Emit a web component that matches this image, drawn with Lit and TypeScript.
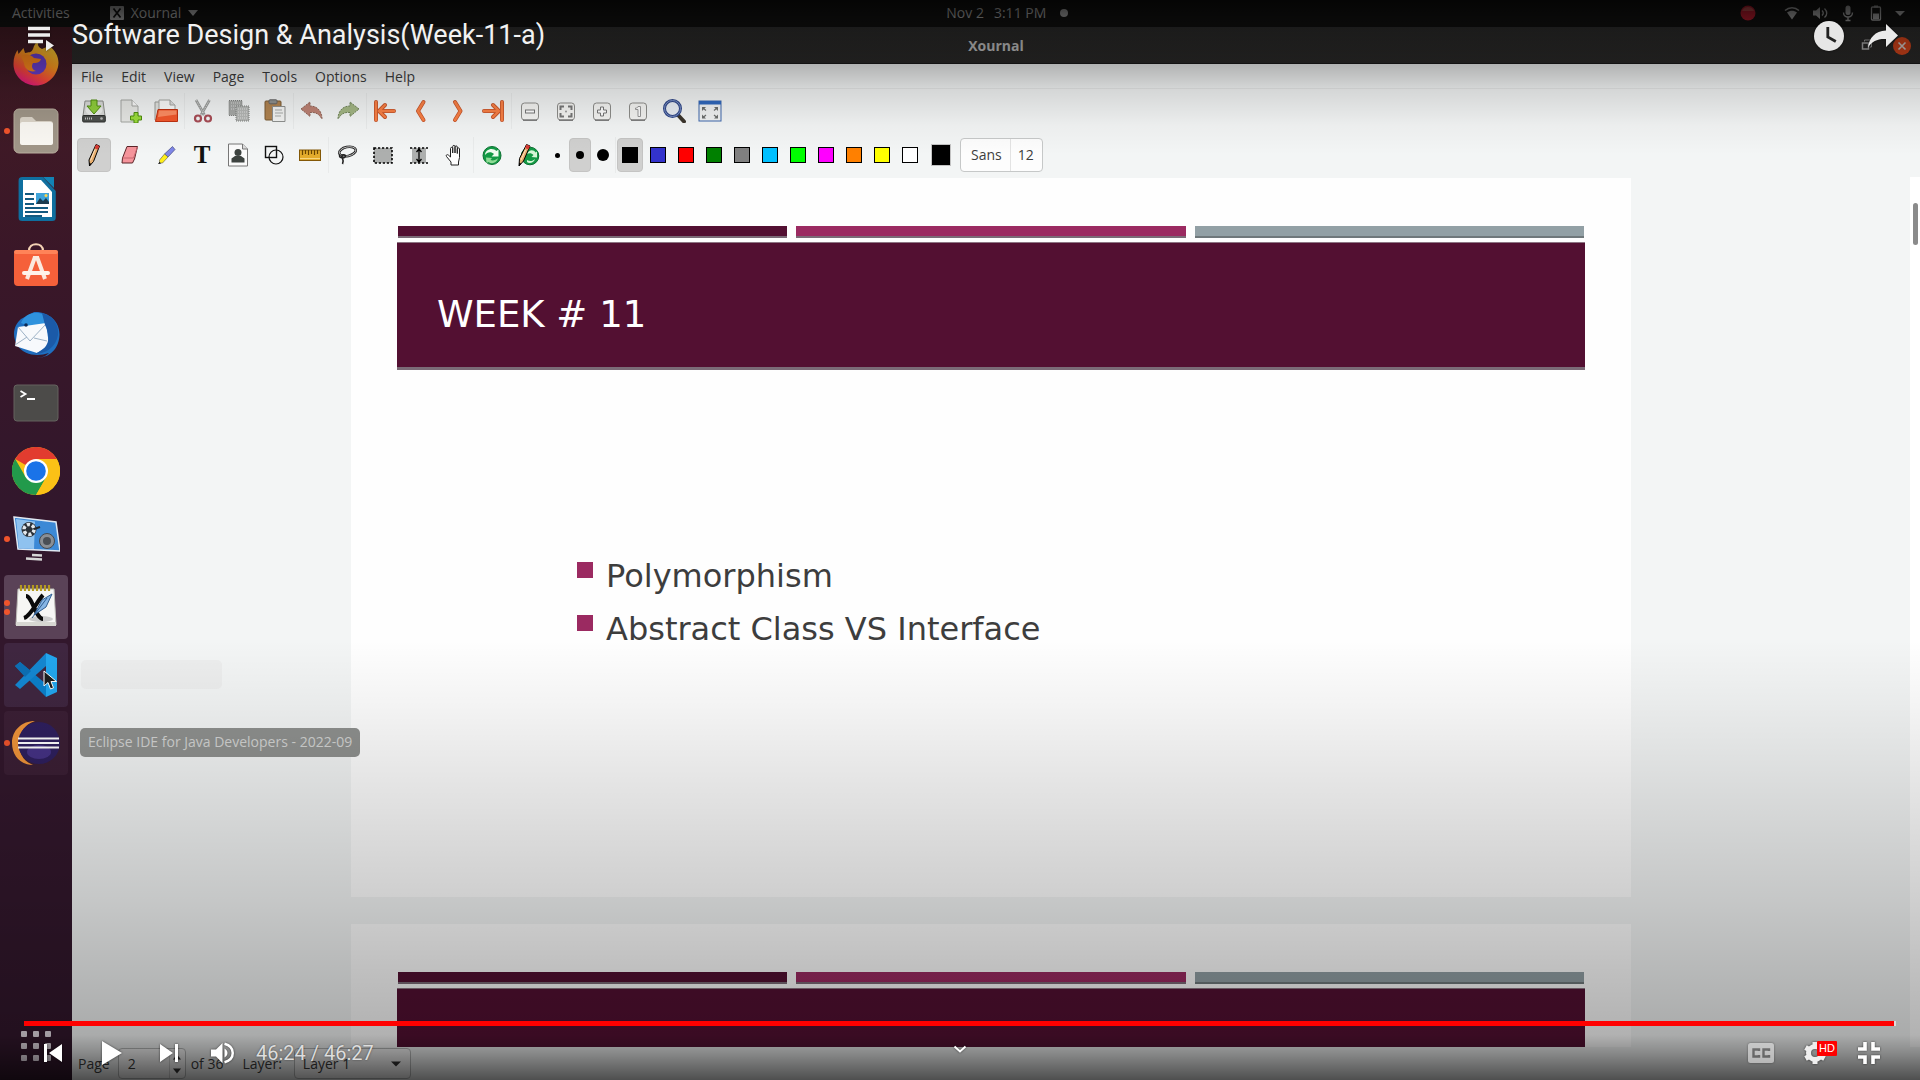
import { LitElement, html, css, svg, nothing, TemplateResult } from "lit";
import { customElement, property, state } from "lit/decorators.js";
import { classMap } from "lit/directives/class-map.js";
import { styleMap } from "lit/directives/style-map.js";

/* ---------- toolbar icons, 24 x 24 ---------- */
const zoomKey = (inner: TemplateResult) => svg`
  <rect x="3.5" y="4" width="17" height="17" rx="3" fill="#f4f4f2" stroke="#8d8d8a"/>
  <path d="M5 21.2h14" stroke="#777" stroke-width="1.4"/>${inner}`;

const arrow = (d: string) => svg`
  <path d=${d} fill="none" stroke="#c4532a" stroke-width="4" stroke-linecap="round" stroke-linejoin="round"/>
  <path d=${d} fill="none" stroke="#f98045" stroke-width="2.4" stroke-linecap="round" stroke-linejoin="round"/>`;

const icons: Record<string, TemplateResult> = {
  save: svg`<path d="M3 2h18l2 15H1z" fill="#d9dad8" stroke="#8b8d89"/>
    <ellipse cx="12" cy="11" rx="8.5" ry="5.5" fill="#eceeeb"/>
    <rect x=".7" y="16.5" width="22.6" height="6.5" rx="1" fill="#4c4f4c" stroke="#2e302e"/>
    <path d="M3 19.500h8" stroke="#c8c8c8" stroke-width="2" stroke-dasharray="1 1"/><circle cx="19.500" cy="19.500" r="1.300" fill="#bbb"/>
    <path d="M9 1h6v6h4l-7 8-7-8h4z" fill="#8fce3c" stroke="#4f8d0e"/>`,
  newpage: svg`<path d="M3 1h11l6 6v16H3z" fill="#e6e7e4" stroke="#a4a6a2"/><path d="M14 1v6h6" fill="#fafafa" stroke="#a4a6a2"/>
    <path d="M16 13.500h4v3.500h3.500v4H20v3h-4v-3h-3.500v-4H16z" fill="#9bdc3a" stroke="#4f8d0e"/>`,
  open: svg`<path d="M1 3h9l2 2v16H1z" fill="#e1e2df" stroke="#9b9d99"/><path d="M5 1h11l5 5v8H5z" fill="#fbfbfa" stroke="#a4a6a2"/><path d="M16 1v5h5" fill="#ddd" stroke="#a4a6a2"/>
    <path d="M4 10.500h19.500v12H1.500z" fill="#f2572b" stroke="#bf3110"/><path d="M5 11.500h17.500v4L4 18z" fill="#ff8d62"/>`,
  cut: svg`<path d="M5 1l8.500 15M18.500 1L10 16" stroke="#9a9c9a" stroke-width="2.600"/><path d="M5 1l8.500 15M18.500 1L10 16" stroke="#e3e4e3" stroke-width="1" stroke-dasharray="1 1"/>
    <circle cx="7" cy="19.500" r="3" fill="none" stroke="#a84c55" stroke-width="2.200"/><circle cx="17" cy="19.500" r="3" fill="none" stroke="#a84c55" stroke-width="2.200"/>`,
  copy: svg`<rect x="2" y="1.500" width="13" height="15" fill="#a6a8a6" stroke="#7f817f" stroke-dasharray="1 1"/><path d="M4 4h9M4 7h9M4 10h9" stroke="#d8d8d8" stroke-dasharray="1 1"/>
    <rect x="9" y="7" width="13" height="15" fill="#b4b6b4" stroke="#7f817f" stroke-dasharray="1 1"/><path d="M11 10h9M11 13h9M11 16h9M11 19h9" stroke="#e0e0e0" stroke-dasharray="1 1"/>`,
  paste: svg`<rect x="2" y="2" width="16" height="19" rx="1" fill="#b08350" stroke="#7b5a33"/><rect x="6" y=".8" width="8" height="4" rx="1" fill="#8e908e" stroke="#666"/>
    <path d="M9.500 7.500H22v15H9.500z" fill="#f3f4f3" stroke="#8f918f"/><path d="M12 11h7M12 14h8M12 17h6" stroke="#a9aba9"/>`,
  undo: svg`<path d="M1 10l9-7v4c8 0 12 6 12 13-3-5-6-7-12-6.500v4z" fill="#bd8274" stroke="#8f6558" stroke-dasharray="2 1"/>`,
  redo: svg`<path d="M23 10l-9-7v4C6 7 2 13 2 20c3-5 6-7 12-6.500v4z" fill="#a3b684" stroke="#6f8258" stroke-dasharray="2 1"/>`,
  first: arrow("M3 3v18M12 6l-6 6 6 6M7 12h14"),
  prev: arrow("M14.500 3L9 12l5.500 9"),
  next: arrow("M10 3l5.500 9-5.500 9"),
  last: arrow("M21 3v18M12 6l6 6-6 6M17 12H3"),
  zoomout: zoomKey(svg`<rect x="7.500" y="11" width="9" height="3" fill="#fff" stroke="#777"/>`),
  zoomfit: zoomKey(svg`<path d="M6.500 11V7.500H10M14 7.500h3.500V11M6.500 14v3.500H10M14 17.500h3.500V14" fill="none" stroke="#777" stroke-width="2"/><circle cx="12" cy="12.500" r="1" fill="#999"/>`),
  zoomin: zoomKey(svg`<path d="M10.500 8h3v3h3v3h-3v3h-3v-3h-3v-3h3z" fill="#fff" stroke="#777"/>`),
  zoomone: zoomKey(svg`<path d="M12 7.500h2.500v10H12v-7h-2.500V9C11 9 12 8.500 12 7.500z" fill="#fff" stroke="#999"/>`),
  find: svg`<path d="M16 16l6 6.500" stroke="#3b352c" stroke-width="4" stroke-linecap="round"/><circle cx="10.500" cy="9.500" r="8" fill="#e8edf4" stroke="#2f4687" stroke-width="3"/><circle cx="10.500" cy="9.500" r="8" fill="none" stroke="#7d93c8"/>`,
  full: svg`<rect x="1" y="2" width="22" height="20" fill="#f1f2f2" stroke="#3f68ae"/><rect x="1" y="2" width="22" height="3.500" fill="#3168bd"/>
    <path d="M4 12V8h4zM20 12V8h-4zM4 15.500v4h4zM20 15.500v4h-4z" fill="#6d6f6d"/><path d="M5 9l3 2.500M19 9l-3 2.500M5 18.500l3-2.500M19 18.500l-3-2.500" stroke="#6d6f6d" stroke-width="1.200"/>`,
  pencil: svg`<path d="M14 1.500L17.500 3 11.500 18.500l-4 4.500-.5-6z" fill="#e8ad6c" stroke="#000"/><path d="M14 1.500L17.500 3l-1.500 3.500-3.500-1.300z" fill="#d63a33"/><path d="M13 6.500L8.500 17.500" stroke="#fbe3c2"/><path d="M7.300 19.500l2 1.500-1.800 2z" fill="#000"/>`,
  eraser: svg`<path d="M9 3.500h10.500L16.500 16 14.500 20H4l.5-5z" fill="#f5949b" stroke="#5b2528"/><path d="M4.500 15h11l4-11" fill="none" stroke="#c7666f"/>`,
  marker: svg`<path d="M18.500 3.500l2.500 3-7 7.500-3.500-3z" fill="#7e86e8" stroke="#33366f" stroke-width=".6"/><path d="M10.500 11l3.500 3-5.500 6H5.500v-3z" fill="#ffef19" stroke="#555" stroke-width=".6"/><path d="M5.500 19L4 21l3-.5" fill="#000"/>`,
  image: svg`<path d="M2.500 1h14l5 5v17h-19z" fill="#fbfbfb" stroke="#777"/><path d="M16.500 1v5h5" fill="#ddd" stroke="#777"/><circle cx="12" cy="9.500" r="3.500" fill="#3d4340"/><path d="M5.500 19.500v-4l3.500-2.500h6l3.500 2.500v4z" fill="#3d4340"/>`,
  shapes: svg`<rect x="3.500" y="3.500" width="11" height="11" fill="none" stroke="#111" stroke-width="1.400"/><circle cx="14" cy="14" r="7" fill="none" stroke="#111" stroke-width="1.200"/>`,
  ruler: svg`<rect x="1.500" y="7" width="21" height="10.500" fill="#e3ab2b" stroke="#835807"/><path d="M4.500 7v5M7.500 7v4M10.500 7v5M13.500 7v4M16.500 7v5M19.500 7v4" stroke="#694500" stroke-width="1.200"/><path d="M2 15.500h20" stroke="#f8d67c"/>`,
  lasso: svg`<ellipse cx="12.500" cy="8.500" rx="8.500" ry="4.500" transform="rotate(-12 12.5 8.5)" fill="none" stroke="#222" stroke-width="2.600"/><ellipse cx="12.500" cy="8.500" rx="8.500" ry="4.500" transform="rotate(-12 12.5 8.5)" fill="none" stroke="#ddd" stroke-width=".8"/><path d="M5 11.500c-2 3 3 4.500 5 2.500s-2-3-3-1.500c-1 3 3 4 .500 8.500" fill="none" stroke="#222" stroke-width="1.600"/>`,
  select: svg`<rect x="3" y="5" width="18" height="15" fill="#adafae" stroke="#000" stroke-width="1.600" stroke-dasharray="2.200 1.800"/>`,
  vspace: svg`<rect x="5" y="5" width="14" height="15" fill="#adafae"/><path d="M3 5h18M3 20h18" stroke="#000" stroke-width="1.600" stroke-dasharray="2.200 1.800"/><path d="M12 6v13M9.500 9L12 6l2.500 3M9.500 16l2.500 3 2.500-3" fill="none" stroke="#000" stroke-width="1.300"/>`,
  hand: svg`<path d="M8 22v-3l-4.500-5.500c-1-1.500.800-2.500 2-1.300L7.500 14V5.500c0-1.500 2-1.500 2.200 0V10 3.500c0-1.500 2.300-1.500 2.300 0V10 4c0-1.500 2.300-1.500 2.300 0v6.500-4.500c0-1.500 2.200-1.500 2.200 0v8.500L15.500 19v3z" fill="#fff" stroke="#222"/>`,
  recycle: svg`<circle cx="12" cy="12.500" r="9" fill="#139a45" stroke="#0b7131"/><path d="M5 12c0-6 8-8 11.500-4l2-1.500v7h-7l2.500-2.500c-3-3-7-2-9 1z" fill="#f0fdf0"/><path d="M6 14.500l6 .5-1.500 2c2.500 1 5.500 0 7.500-2-1 5-6 6.500-9.500 4l-2 1z" fill="#8fdb95"/>`,
  pendefault: svg`<circle cx="14" cy="13" r="8.800" fill="#139a45" stroke="#0b7131"/><path d="M11 11c2-5 7-4.500 8.500-1.500l1.500-1v6l-5.500-.5 2-2c-2-2.500-5-2-6.500-1zM11 17c3 2 6 1 8-1-1 4-6 5-8 3z" fill="#d5f6d6"/><path d="M10.500 1.500L14 3 7.500 18l-4.500 5 .5-7.500z" fill="#e8ad6c" stroke="#000"/><path d="M10.500 1.500L14 3l-1.500 3.500L9 5z" fill="#d63a33"/><path d="M9.500 7L5 17" stroke="#fbe3c2"/><path d="M3.200 19.500l2 1.300L3 23z" fill="#000"/>`,
};

/* ---------- launcher icons, 48 x 48 ---------- */
const apps: Record<string, TemplateResult> = {
  firefox: svg`<defs><linearGradient id="ff" x1=".8" y1="0" x2=".3" y2="1"><stop offset="0" stop-color="#ffe13a"/><stop offset=".45" stop-color="#ff9a1f"/><stop offset=".75" stop-color="#ff4a3b"/><stop offset="1" stop-color="#e31587"/></linearGradient></defs>
    <path d="M27 1c-2 5-1 7 3 9l7-3c6 4 9.500 10 9.500 17C46 36 36 46.500 24 46.500S1.500 37 1.500 25c0-6 1.500-10 4-14l1 4 5-6 1.500 5c4-1 6 0 8-4 1-4 3-7 6-9z" fill="url(#ff)"/>
    <circle cx="24" cy="25" r="10.500" fill="#6a3fd0"/><path d="M9 17c5-3 10-1 13 2l7 1c-1 4-5 4-8 4-2 3-1 7 3 8-7 2-12-3-12-8z" fill="#ff8a1c"/>`,
  files: svg`<rect x="2" y="2" width="44" height="44" rx="5" fill="#a09688" stroke="#b9ae9e"/><path d="M8 13c0-2 1-3 3-3h9l4 4h14c2 0 3 1 3 3v18c0 2-1 3-3 3H11c-2 0-3-1-3-3z" fill="#dcd5c9"/><rect x="8" y="15" width="33" height="23" rx="2.500" fill="#faf8f3"/>`,
  writer: svg`<path d="M10 2h22l14 14v26c0 3-1 4-4 4H10c-3 0-4-1-4-4V6c0-3 1-4 4-4z" transform="translate(1 0) scale(.93 1)" fill="#0f6f9f"/><path d="M31 2h11v11z" fill="#1283b5"/><path d="M11 5h18l11 12v25H11z" fill="#fff"/><path d="M13 19h9M13 24h9M13 29h9M13 33h23M13 37h23M13 41h17" stroke="#135a80" stroke-width="2"/><rect x="24" y="18" width="13" height="11" fill="#3fa4da"/><path d="M24 29l4-6 3 3 3-3 3 4v2z" fill="#1c3c4f"/><circle cx="34" cy="20.500" r="1.500" fill="#ffd54a"/>`,
  software: svg`<path d="M17 8c0-9 14-9 14 0" fill="none" stroke="#f3d2b4" stroke-width="2.200"/><rect x="2" y="7" width="44" height="36" rx="4" fill="#f5603a"/><rect x="2" y="7" width="44" height="4" rx="2" fill="#ff8358"/>
    <path d="M23 14l-8 22M25 14l8 22" stroke="#fbe9df" stroke-width="4"/><rect x="21" y="13" width="6" height="4" fill="#fbe9df"/><rect x="10" y="28" width="28" height="4" rx="2" fill="#fff3ea"/>`,
  thunderbird: svg`<path d="M22 1c14-1 26 9 25.500 23C47 38 37 48 22 47c8 0 12-2 15-5-12 4-25 2-31-7C-1 25 2 14 9 8z" fill="#1f6fc0"/><path d="M9 12C12 3 24-1 32 4c6 5 4 14-3 16z" fill="#2f92dd"/><path d="M3 35L6 16l28-4 3 22-12 8z" fill="#f7f9fc"/><path d="M6 16l12 14 16-17M3 34l12-8M35 30l-13-3" fill="none" stroke="#9db2c6"/><path d="M30 2c12 3 17 12 16 22-2 12-12 19-24 19 16-5 17-17 11-29z" fill="#1b5aa8"/><circle cx="14" cy="14" r="1.800" fill="#0d2a55"/>`,
  terminal: svg`<rect x="2" y="6" width="44" height="36" rx="3" fill="#4c4b49" stroke="#65635f"/><path d="M8.500 12l5 3-5 3M15 20h8" fill="none" stroke="#fff" stroke-width="1.800"/>`,
  chrome: svg`<circle cx="24" cy="24" r="24" fill="#fbc116"/><path d="M24 24L3.200 12A24 24 0 0 1 44.800 12H24z" fill="#e23c2f"/><path d="M3.200 12A24 24 0 0 0 24 48L34.400 30 24 24 13.600 30z" fill="#229a4b"/><path d="M24 12h20.800A24 24 0 0 1 24 48l10.400-18z" fill="#fbc116"/><circle cx="24" cy="24" r="12" fill="#fff"/><circle cx="24" cy="24" r="9.800" fill="#1a73e8"/>`,
  recorder: svg`<path d="M2 2l42 5 4 29-42-2z" fill="#3c89d6" stroke="#dfe8f2" stroke-width="1.500"/><path d="M4 4l19 2.500L22 34 7 33z" fill="#8fc2ef"/><path d="M20 40l10 .5M14 43.500l16 1" stroke="#d8d8d8" stroke-width="2.500"/><circle cx="17" cy="14.500" r="7.500" fill="#2b3138"/><circle cx="17" cy="14.500" r="5" fill="none" stroke="#e4e8ec" stroke-width="3.500" stroke-dasharray="3.200 2"/><path d="M22 14l6-2" stroke="#20252b" stroke-width="2"/><circle cx="35" cy="26" r="7.500" fill="#8a8f95" stroke="#454a50"/><circle cx="35" cy="26" r="4" fill="#4a4f55"/>`,
  xournal: svg`<path d="M6 6h36l2 36H4z" fill="#f6f6f4" stroke="#bdbdb8"/><path d="M4 39h40v4H4z" fill="#d7d7d2"/><path d="M9 2v6M13 2v6M17 2v6M21 2v6M25 2v6M29 2v6M33 2v6M37 2v6" stroke="#b49a22" stroke-width="2.200"/><ellipse cx="29" cy="36" rx="12" ry="3" fill="#ccc"/><path d="M14 13c6 0 10 23 17 23M31 12c-6 6-12 21-19 23" fill="none" stroke="#0a0a0a" stroke-width="4"/><path d="M40 11l-10 6-8 15 12-8z" fill="#86b5e4" stroke="#2f5d90"/><path d="M35 15L20 35" stroke="#2f5d90"/>`,
  vscode: svg`<path d="M3 15l5-4 26 22v13z" fill="#0b7fc9"/><path d="M3 34l5 4 26-23V2z" fill="#1487d1"/><path d="M3 15l5-4 11 9-6 6z" fill="#0d6fb4"/><path d="M34 2l11 5v34l-11 5z" fill="#22a6ee"/>`,
  eclipse: svg`<path d="M23 2C10 2 0 11 0 24s9 22 21 22C11 42 7 34 7 24S13 5 23 2z" fill="#f0943a"/><circle cx="27" cy="24" r="21" fill="#2e1f5e"/><ellipse cx="27" cy="33" rx="12" ry="7" fill="#453285"/><path d="M6 19.500h41M6 24h41M6 28.500h41" stroke="#fff" stroke-width="2.200"/>`,
};

const launcher = [
  { id: "firefox", label: "Firefox Web Browser", dots: 0 },
  { id: "files", label: "Files", dots: 1 },
  { id: "writer", label: "LibreOffice Writer", dots: 0 },
  { id: "software", label: "Ubuntu Software", dots: 0 },
  { id: "thunderbird", label: "Thunderbird Mail", dots: 0 },
  { id: "terminal", label: "Terminal", dots: 0 },
  { id: "chrome", label: "Google Chrome", dots: 0 },
  { id: "recorder", label: "SimpleScreenRecorder", dots: 1 },
  { id: "xournal", label: "Xournal", dots: 2, tone: "active" },
  { id: "vscode", label: "Visual Studio Code", dots: 0, tone: "hover", pointer: true },
  { id: "eclipse", label: "Eclipse IDE", dots: 1, tone: "faint", tip: "Eclipse IDE for Java Developers - 2022-09" },
];

const mainTools = [
  ["save", "newpage", "open"],
  ["cut", "copy", "paste"],
  ["undo", "redo"],
  ["first", "prev", "next", "last"],
  ["zoomout", "zoomfit", "zoomin", "zoomone", "find", "full"],
];
const penTools = [
  ["pencil", "eraser", "marker", "text", "image", "shapes", "ruler"],
  ["lasso", "select", "vspace", "hand"],
  ["recycle", "pendefault"],
];
const swatches = ["#000000", "#3333cc", "#ff0000", "#008000", "#808080", "#00c0ff", "#00ff00", "#ff00ff", "#ff8000", "#ffff00", "#ffffff"];

@customElement("app-dock")
export class AppDock extends LitElement {
  static styles = css`
    :host { display: flex; flex-direction: column; justify-content: space-between; background: linear-gradient(#431b24, #3a1728 22%, #32172c 45%, #32172c); font: 14px/20px "Open Sans", "Noto Sans", sans-serif; }
    .list { display: flex; flex-direction: column; gap: 4px; padding: 4px 4px; }
    .app { position: relative; display: flex; align-items: center; justify-content: center; height: 64px; padding: 0; border: 0; border-radius: 4px; background: none; font: inherit; }
    .active { background: #5a4257; }
    .hover { background: #3f2640; }
    .faint { background: #3b1f35; }
    .icon { width: 48px; height: 48px; }
    .marks { position: absolute; left: 0; top: 0; height: 100%; display: flex; flex-direction: column; gap: 3px; justify-content: center; }
    .mark { width: 6px; height: 6px; border-radius: 50%; background: #f0542c; }
    .pointer { position: absolute; left: 39px; top: 27px; width: 14px; height: 20px; }
    .tip { position: absolute; left: 76px; top: 17px; padding: 4px 8px 5px; border-radius: 5px; background: #8f918f; color: #d3d4d3; white-space: nowrap; z-index: 2; }
    .fading { position: absolute; left: 77px; top: 17px; width: 141px; height: 29px; border-radius: 5px; background: #edeeee; }
    .grid { align-self: center; display: grid; grid-template-columns: repeat(3, 6px); gap: 6px; margin-bottom: 19px; padding: 0; border: 0; background: none; }
    .cell { width: 6px; height: 6px; border-radius: 1px; background: #e8dfe8; }
  `;
  render() {
    return html`<nav class="list" aria-label="Launcher">
        ${launcher.map((a) => html`<button class=${classMap({ app: true, [a.tone ?? "plain"]: true })} aria-label=${a.label}>
          <svg class="icon" viewBox="0 0 48 48" aria-hidden="true">${apps[a.id]}</svg>
          <span class="marks">${Array.from({ length: a.dots }, () => html`<span class="mark"></span>`)}</span>
          ${a.pointer ? html`<span class="fading"></span><svg class="pointer" viewBox="0 0 14 20"><path d="M1 1v15l4-3.500L7.500 19l3-1.200L8 11.500h5.500z" fill="#1d1d1d" stroke="#fff"/></svg>` : nothing}
          ${a.tip ? html`<span class="tip" role="tooltip">${a.tip}</span>` : nothing}
        </button>`)}
      </nav>
      <button class="grid" aria-label="Show Applications">${Array.from({ length: 9 }, () => html`<span class="cell"></span>`)}</button>`;
  }
}

@customElement("slide-page")
export class SlidePage extends LitElement {
  @property() heading = "";
  @property({ type: Array }) points: string[] = [];
  static styles = css`
    :host { display: block; box-sizing: border-box; padding: 48px 46px; background: #fefefe; font-family: "DejaVu Sans", sans-serif; }
    .rules { display: grid; grid-template-columns: repeat(3, 1fr); gap: 9px; padding: 0 1px; }
    .rule { height: 10px; border-bottom: 2px solid #7b6b77; background: #531032; }
    .rule:nth-child(2) { background: #9b2a61; }
    .rule:nth-child(3) { background: #92a0a5; border-color: #6f787b; }
    .banner { display: flex; align-items: center; box-sizing: border-box; height: 128px; margin-top: 4px; padding: 20px 40px 0; border-top: 1px solid #8d7583; border-bottom: 3px solid #7b6b77; background: #531032; }
    h1 { margin: 0; color: #fff; font-size: 37px; line-height: 44px; font-weight: 400; }
    ul { list-style: none; margin: 0; padding: 180px 0 0 180px; }
    li { display: flex; gap: 13px; height: 53px; font-size: 32px; line-height: 53px; color: #3d3d3d; white-space: nowrap; }
    li::before { content: ""; width: 16px; height: 16px; margin-top: 12px; background: #9b2a61; }
  `;
  render() {
    return html`<div class="rules"><div class="rule"></div><div class="rule"></div><div class="rule"></div></div>
      <div class="banner">${this.heading ? html`<h1>${this.heading}</h1>` : nothing}</div>
      ${this.points.length ? html`<ul>${this.points.map((p) => html`<li>${p}</li>`)}</ul>` : nothing}`;
  }
}

@customElement("xournal-window")
export class XournalWindow extends LitElement {
  @state() tool = "pencil";
  @state() width = 1;
  @state() color = 0;
  static styles = css`
    :host { display: flex; flex-direction: column; min-width: 0; background: #f3f5f5; font: 14px/20px "Open Sans", "Noto Sans", sans-serif; color: #3d3d3d; }
    button, input, select { font: inherit; color: inherit; }
    .title { display: grid; grid-template-columns: 1fr auto 1fr; align-items: center; height: 37px; background: linear-gradient(#2f2f2e, #2b2a29); color: #cfcfcf; box-sizing: border-box; padding-top: 1px; border-bottom: 1px solid #1a1a1a; }
    .title strong { grid-column: 2; font-weight: 700; }
    .wm { display: flex; justify-content: flex-end; align-items: center; gap: 17px; padding-right: 9px; }
    .wm button { width: 18px; height: 18px; padding: 0; border: 0; border-radius: 50%; background: none; }
    .wm svg { display: block; width: 18px; height: 18px; }
    .wm .close { background: #e2491d; }
    .menu { display: flex; height: 25px; box-sizing: border-box; padding-top: 1px; border-bottom: 1px solid #e6e8e8; }
    .menu button { padding: 0 9px; border: 0; background: none; line-height: 23px; }
    .bar { display: flex; align-items: center; height: 44px; padding-left: 4px; }
    .sep { width: 1px; height: 36px; background: #e9ebeb; }
    .tool { display: flex; align-items: center; justify-content: center; box-sizing: border-box; width: 34px; height: 34px; margin: 0 1px; padding: 0; border: 1px solid transparent; border-radius: 4px; background: none; }
    .tool svg { width: 24px; height: 24px; }
    .letter { font: 700 25px/28px "Liberation Serif", serif; color: #111; }
    .width { width: 22px; margin: 0 1px 0 0; }
    .swatch { width: 26px; }
    .on { background: #d0d0cf; border-color: #c4c4c3; }
    .dot { border-radius: 50%; background: #000; }
    .dot0 { width: 5px; height: 5px; }
    .dot1 { width: 8px; height: 8px; }
    .dot2 { width: 12px; height: 12px; }
    .chip { box-sizing: border-box; width: 16px; height: 16px; border: 1px solid #000; }
    .pick { width: 20px; height: 22px; margin: 0 9px 0 7px; padding: 0; border: 1px solid #c3c3c3; background: #000; }
    .font { display: flex; align-items: center; box-sizing: border-box; height: 34px; padding: 0 8px 0 10px; border: 1px solid #c6c8c8; border-radius: 4px; background: #fdfdfd; }
    .font span + span { margin-left: 8px; padding-left: 7px; border-left: 1px solid #e3e3e3; line-height: 32px; }
    .view { display: flex; flex: 1; min-height: 0; }
    .desk { flex: 1; min-width: 0; overflow: hidden; display: flex; flex-direction: column; align-items: center; gap: 27px; padding-top: 1px; }
    slide-page { flex: none; width: 70%; max-width: 1280px; min-height: 719px; }
    .scroll { width: 10px; box-sizing: border-box; padding: 26px 2px 0 3px; background: #fff; }
    .thumb { height: 42px; border-radius: 3px; background: #8b8b8b; }
    .status { display: flex; align-items: center; height: 33px; padding-left: 6px; }
    .spin, .combo { display: flex; align-items: center; box-sizing: border-box; height: 31px; border: 1px solid #b9bbbb; border-radius: 4px; background: #fafafa; }
    .spin { margin: 0 5px 0 8px; }
    .spin input { width: 50px; box-sizing: border-box; padding: 0 9px; border: 0; background: none; appearance: textfield; }
    .spin input::-webkit-inner-spin-button { appearance: none; }
    .steps { display: flex; flex-direction: column; border-left: 1px solid #d5d5d5; }
    .steps button { display: flex; align-items: center; justify-content: center; width: 15px; height: 14px; padding: 0; border: 0; background: none; }
    .steps svg, .combo svg { width: 10px; height: 6px; }
    .label { margin: 0 12px 0 19px; }
    .combo { width: 117px; padding-right: 9px; }
    .combo select { flex: 1; min-width: 0; padding: 0 8px; border: 0; background: none; appearance: none; }
  `;
  private toolButton(id: string) {
    return html`<button class=${classMap({ tool: true, on: this.tool === id })} aria-label=${id} @click=${() => { if (penTools.flat().includes(id)) this.tool = id; }}>
      ${id === "text" ? html`<span class="letter">T</span>` : html`<svg viewBox="0 0 24 24" aria-hidden="true">${icons[id]}</svg>`}</button>`;
  }
  render() {
    return html`
      <header class="title"><strong>Xournal</strong>
        <div class="wm">
          <button aria-label="Restore"><svg viewBox="0 0 18 18"><path d="M6.500 4.500V3h7v7H12" fill="none" stroke="#aaa"/><rect x="4.500" y="6" width="6" height="6" fill="none" stroke="#bbb" stroke-width="1.500"/></svg></button>
          <button class="close" aria-label="Close"><svg viewBox="0 0 18 18"><path d="M5.500 5.500l7 7M12.500 5.500l-7 7" stroke="#e8e0dc" stroke-width="1.600"/></svg></button>
        </div></header>
      <nav class="menu">${["File", "Edit", "View", "Page", "Tools", "Options", "Help"].map((m) => html`<button>${m}</button>`)}</nav>
      <div class="bar">${mainTools.map((g, i) => html`${i ? html`<span class="sep"></span>` : nothing}${g.map((t) => this.toolButton(t))}`)}</div>
      <div class="bar">${penTools.map((g, i) => html`${i ? html`<span class="sep"></span>` : nothing}${g.map((t) => this.toolButton(t))}`)}
        ${[0, 1, 2].map((n) => html`<button class=${classMap({ tool: true, width: true, on: this.width === n })} aria-label="Pen width ${n + 1}" @click=${() => (this.width = n)}><span class="dot dot${n}"></span></button>`)}
        <span class="sep"></span>
        ${swatches.map((c, i) => html`<button class=${classMap({ tool: true, swatch: true, on: this.color === i })} aria-label=${c} @click=${() => (this.color = i)}><span class="chip" style=${styleMap({ background: c })}></span></button>`)}
        <button class="pick" aria-label="Choose colour"></button>
        <button class="font"><span>Sans</span><span>12</span></button>
      </div>
      <main class="view">
        <div class="desk">
          <slide-page heading="WEEK # 11" .points=${["Polymorphism", "Abstract Class VS Interface"]}></slide-page>
          <slide-page></slide-page>
        </div>
        <div class="scroll"><div class="thumb"></div></div>
      </main>
      <footer class="status">
        <label for="page">Page</label>
        <span class="spin"><input id="page" type="number" value="2" />
          <span class="steps"><button aria-label="Next page"><svg viewBox="0 0 10 6"><path d="M1 5.500L5 .500l4 5z" fill="#333"/></svg></button><button aria-label="Previous page"><svg viewBox="0 0 10 6"><path d="M1 .500l4 5 4-5z" fill="#333"/></svg></button></span></span>
        <span>of 36</span>
        <label class="label" for="layer">Layer:</label>
        <span class="combo"><select id="layer"><option>Layer 1</option></select><svg viewBox="0 0 10 6"><path d="M0 .500l5 5 5-5z" fill="#333"/></svg></span>
      </footer>`;
  }
}

@customElement("player-overlay")
export class PlayerOverlay extends LitElement {
  static styles = css`
    :host { display: flex; flex-direction: column; justify-content: space-between; color: #eee; font-family: Roboto, sans-serif;
      background: linear-gradient(rgba(0,0,0,.72), rgba(0,0,0,.45) 20px, rgba(0,0,0,.27) 64px, rgba(0,0,0,.13) 88px, rgba(0,0,0,.03) 125px, transparent 155px) top / 100% 160px no-repeat,
        linear-gradient(transparent, rgba(0,0,0,.04) 60px, rgba(0,0,0,.19) 260px, rgba(0,0,0,.30) 395px, rgba(0,0,0,.43) 412px, rgba(0,0,0,.68)) bottom / 100% 440px no-repeat; }
    button { display: flex; align-items: center; justify-content: center; padding: 0; border: 0; background: none; color: inherit; }
    svg { display: block; filter: drop-shadow(0 0 1px rgba(0,0,0,.6)); }
    .head { display: flex; align-items: center; gap: 2px; height: 72px; padding-right: 10px; }
    .menu { width: 70px; }
    .menu svg { width: 28px; height: 28px; margin-left: 12px; margin-top: 8px; }
    h2 { flex: 1; margin: 0 0 2px; color: #f2f2f2; font-size: 27px; line-height: 32px; font-weight: 400; }
    .top { width: 54px; }
    .top svg { width: 36px; height: 36px; }
    .foot { display: flex; flex-direction: column; }
    .seek { appearance: none; height: 5px; margin: 0 24px; background: linear-gradient(90deg, #f00 var(--played), #ddd var(--played)); }
    .seek::-webkit-slider-thumb { appearance: none; width: 0; height: 0; }
    .row { display: grid; grid-template-columns: 1fr auto 1fr; align-items: center; height: 54px; padding: 0 24px; }
    .left { display: flex; align-items: center; gap: 2px; padding-left: 1px; }
    .left button { width: 56px; height: 54px; }
    .left .vol { width: 46px; }
    .left svg { width: 24px; height: 24px; }
    .time { margin-left: 9px; font-size: 20px; line-height: 24px; color: #ddd; text-shadow: 0 0 2px rgba(0,0,0,.5); }
    .mid svg { width: 16px; height: 16px; }
    .right { display: flex; justify-content: flex-end; }
    .right button { position: relative; width: 54px; height: 54px; }
    .right svg { width: 28px; height: 28px; }
    .cc { opacity: .6; }
    .hd { position: absolute; left: 29px; top: 15px; padding: 0 2px; border-radius: 1px; background: #f00; color: #fff; font-size: 11px; line-height: 15px; font-weight: 500; }
  `;
  render() {
    return html`
      <header class="head">
        <button class="menu" aria-label="Playlist"><svg viewBox="0 0 28 28"><path d="M1 2.500h22M1 9h22M1 15.500h15" stroke="#eee" stroke-width="3.500"/><path d="M19 14l8 5.500-8 5.500z" fill="#eee"/></svg></button>
        <h2>Software Design &amp; Analysis(Week-11-a)</h2>
        <button class="top" aria-label="Watch later"><svg viewBox="0 0 36 36"><circle cx="20" cy="18" r="15" fill="#e6e6e6"/><path d="M18.800 9v10l8 4.500" fill="none" stroke="#222" stroke-width="2.800"/></svg></button>
        <button class="top" aria-label="Share"><svg viewBox="0 0 36 36"><path d="M21 6l12 11.500L21 29v-8C13 20.500 7 23 3 29.500 4 20 10 13 21 12.500z" fill="#eaeaea"/></svg></button>
      </header>
      <footer class="foot">
        <input class="seek" type="range" aria-label="Seek" min="0" max="2787" value="2784" style=${styleMap({ "--played": `${(2784 / 2787) * 100}%` })} />
        <div class="row">
          <div class="left">
            <button aria-label="Previous"><svg viewBox="0 0 24 24"><path d="M3 3h3v18H3zM21 3v18L8 12z" fill="#fff"/></svg></button>
            <button aria-label="Play"><svg viewBox="0 0 24 24"><path d="M3 0l20 12L3 24z" fill="#fff"/></svg></button>
            <button aria-label="Next"><svg viewBox="0 0 24 24"><path d="M3 3l13 9-13 9zM18 3h3v18h-3z" fill="#fff"/></svg></button>
            <button class="vol" aria-label="Mute"><svg viewBox="0 0 24 24"><path d="M1 8.500h5L12.500 2v20L6 15.500H1z" fill="#fff"/><path d="M14.500 7.500c4 2 4 7 0 9z" fill="#fff"/><path d="M14.500 2.800c11 3 11 15.400 0 18.400" fill="none" stroke="#fff" stroke-width="2.500"/></svg></button>
            <span class="time">46:24 / 46:27</span>
          </div>
          <button class="mid" aria-label="More"><svg viewBox="0 0 16 16"><path d="M2.500 1.500l5.500 5 5.500-5" fill="none" stroke="#fff" stroke-width="2"/></svg></button>
          <div class="right">
            <button class="cc" aria-label="Subtitles"><svg viewBox="0 0 28 28"><rect x="1" y="4" width="26" height="20" rx="2.500" fill="#e6e6e6"/><path d="M12 12v-1.500H6.500v7H12V16M22 12v-1.500h-5.500v7H22V16" fill="none" stroke="#555" stroke-width="2.400"/></svg></button>
            <button aria-label="Settings"><svg viewBox="0 0 28 28"><circle cx="14" cy="14" r="6.500" fill="none" stroke="#eee" stroke-width="5"/><path d="M14 3v5M14 20v5M4.500 8.500l4.300 2.500M19.200 17l4.300 2.500M4.500 19.500L8.800 17M19.200 11l4.300-2.500" stroke="#eee" stroke-width="5"/></svg><span class="hd">HD</span></button>
            <button aria-label="Exit full screen"><svg viewBox="0 0 28 28"><path d="M10 3v7H3M18 3v7h7M10 25v-7H3M18 25v-7h7" fill="none" stroke="#fff" stroke-width="3.600"/></svg></button>
          </div>
        </div>
      </footer>`;
  }
}

@customElement("app-root")
export class AppRoot extends LitElement {
  static styles = css`
    :host { position: relative; display: flex; flex-direction: column; height: 100vh; overflow: hidden; background: #111; }
    .panel { display: grid; grid-template-columns: 10fr auto 9fr; align-items: center; box-sizing: border-box; height: 27px; padding-bottom: 1px; background: #111110; color: #a2a2a2; font: 14px/20px "Open Sans", "Noto Sans", sans-serif; }
    .side, .clock, .tray { display: flex; align-items: center; }
    .side { padding-left: 12px; }
    .panel button { display: flex; align-items: center; padding: 0; border: 0; background: none; color: inherit; font: inherit; }
    .side .appmenu { gap: 7px; margin-left: 40px; }
    .appmenu svg { width: 14px; height: 14px; }
    .appmenu .caret { width: 10px; height: 6px; }
    .panel .clock { gap: 10px; white-space: pre; }
    .clock .dot { width: 8px; height: 8px; margin-left: 4px; border-radius: 50%; background: #a2a2a2; }
    .tray { justify-content: flex-end; gap: 10px; padding-right: 15px; }
    .tray svg { width: 18px; height: 18px; }
    .tray .rec { margin-right: 16px; }
    .tray .down { width: 10px; }
    .work { display: flex; flex: 1; min-height: 0; }
    app-dock { flex: none; width: 72px; z-index: 1; }
    xournal-window { flex: 1; }
    player-overlay { position: absolute; inset: 0; z-index: 2; }
  `;
  render() {
    return html`
      <header class="panel">
        <div class="side"><button>Activities</button>
          <button class="appmenu"><svg viewBox="0 0 14 14"><rect width="14" height="14" rx="1" fill="#999"/><path d="M3.500 2.500l7 9M10.500 2.500l-7 9" stroke="#111" stroke-width="1.800"/></svg>Xournal<svg class="caret" viewBox="0 0 10 6"><path d="M0 0h10L5 6z" fill="#aaa"/></svg></button></div>
        <button class="clock"><span>Nov 2</span><span>3:11 PM</span><span class="dot"></span></button>
        <div class="tray">
          <svg class="rec" viewBox="0 0 18 18"><circle cx="9" cy="9" r="7.500" fill="#b01a2b"/><path d="M3 7a6.500 6.500 0 0 1 12 0z" fill="#b84a4a"/></svg>
          <svg viewBox="0 0 18 18"><path d="M2 6.500C6 2.800 12 2.800 16 6.500" fill="none" stroke="#9a9a9a" stroke-width="1.500"/><path d="M4 8.500c3-2.500 7-2.500 10 0L9 15.500z" fill="#9a9a9a"/></svg>
          <svg viewBox="0 0 18 18"><path d="M2 6.500h3L9 3v12l-4-3.500H2z" fill="#9a9a9a"/><path d="M11 6.500c1.500 1.500 1.500 3.500 0 5M13.500 4.500c3 3 3 6.500 0 9" fill="none" stroke="#9a9a9a" stroke-width="1.300"/></svg>
          <svg viewBox="0 0 18 18"><rect x="6.500" y="1.500" width="5" height="9.500" rx="2.500" fill="#9a9a9a"/><path d="M4.500 8.500c0 6 9 6 9 0M9 13v3M6.500 16.500h5" fill="none" stroke="#9a9a9a" stroke-width="1.400"/></svg>
          <svg viewBox="0 0 18 18"><path d="M7 1.500h4v2H7z" fill="#9a9a9a"/><rect x="4.500" y="3" width="9" height="13" rx="1" fill="none" stroke="#9a9a9a" stroke-width="1.300"/><path d="M6 9.500h6V15H6z" fill="#9a9a9a"/></svg>
          <svg class="down" viewBox="0 0 10 18"><path d="M0 7h10l-5 5z" fill="#9a9a9a"/></svg>
        </div>
      </header>
      <div class="work"><app-dock></app-dock><xournal-window></xournal-window></div>
      <player-overlay></player-overlay>`;
  }
}
